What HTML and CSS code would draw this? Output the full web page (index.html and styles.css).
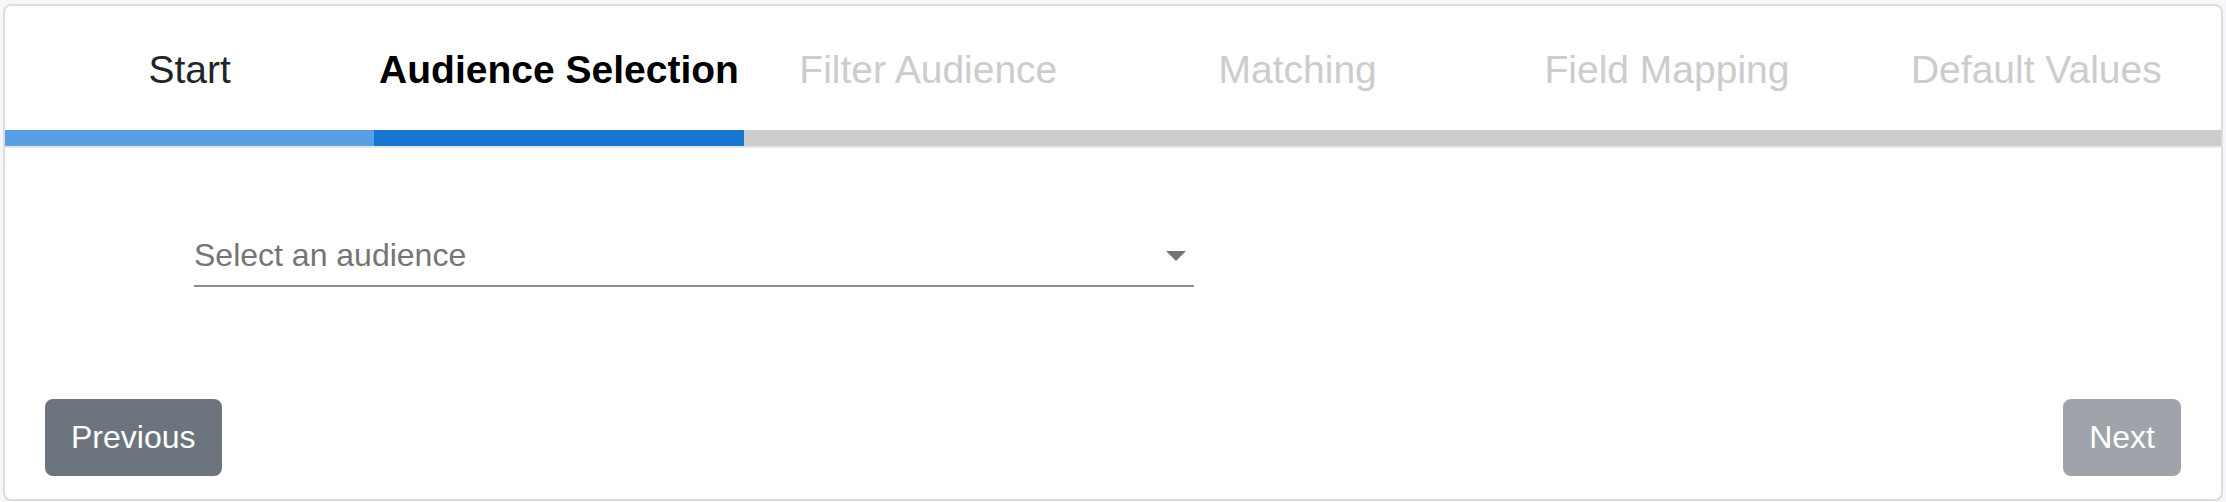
FILE: index.html
```html
<!DOCTYPE html>
<html lang="en">
<head>
<meta charset="utf-8">
<title>Audience Selection</title>
<link rel="stylesheet" href="styles.css">
</head>
<body>
<div class="card">
  <div class="steps">
    <div class="step step-done">Start</div>
    <div class="step step-active">Audience Selection</div>
    <div class="step">Filter Audience</div>
    <div class="step">Matching</div>
    <div class="step">Field Mapping</div>
    <div class="step">Default Values</div>
  </div>
  <div class="progress">
    <div class="seg seg-done"></div>
    <div class="seg seg-active"></div>
    <div class="seg"></div>
    <div class="seg"></div>
    <div class="seg"></div>
    <div class="seg"></div>
  </div>
  <div class="content">
    <div class="select">
      <span class="select-text">Select an audience</span>
      <svg class="select-arrow" viewBox="0 0 24 24" width="48" height="48" aria-hidden="true"><path d="M7 10l5 5 5-5z" fill="#757575"/></svg>
    </div>
  </div>
  <div class="footer">
    <button class="btn">Previous</button>
    <button class="btn btn-disabled" disabled>Next</button>
  </div>
</div>
</body>
</html>
```

FILE: styles.css
```css
html, body {
  margin: 0;
  background: #f5f7fa;
}
body {
  padding: 4px 3px 0 3px;
  font-family: "Liberation Sans", Arial, Helvetica, sans-serif;
}
.card {
  background: #fff;
  border: 2px solid #dcdcdc;
  border-radius: 8px;
  overflow: hidden;
  height: 493px;
  display: flex;
  flex-direction: column;
}
.steps {
  display: grid;
  grid-template-columns: repeat(6, 1fr);
  height: 124px;
  padding-top: 3px;
  box-sizing: border-box;
  align-items: center;
}
.step {
  text-align: center;
  font-size: 39px;
  color: #cccccc;
  white-space: nowrap;
}
.step-done {
  color: #212529;
}
.step-active {
  color: #000;
  font-weight: bold;
}
.progress {
  display: grid;
  grid-template-columns: repeat(6, 1fr);
  height: 16px;
  background: #cccccc;
  border-bottom: 2px solid #e6e6e6;
}
.seg-done {
  background: #57a0e5;
}
.seg-active {
  background: #1976d2;
}
.content {
  padding: 75px 0 0 189px;
  flex: 1;
}
.select {
  position: relative;
  width: 1000px;
  height: 64px;
  border-bottom: 2px solid #8c8c8c;
  display: flex;
  align-items: center;
  padding-top: 2px;
  box-sizing: border-box;
}
.select-text {
  font-size: 32px;
  color: #757575;
}
.select-arrow {
  position: absolute;
  right: -6px;
  top: 8px;
}
.footer {
  display: flex;
  justify-content: space-between;
  padding: 0 40px 23px 40px;
}
.btn {
  font-family: "Liberation Sans", Arial, Helvetica, sans-serif;
  font-size: 32px;
  line-height: 1.5;
  padding: 12px 24px 13px;
  color: #fff;
  background: #6c757d;
  border: 2px solid #6c757d;
  border-radius: 8px;
}
.btn-disabled {
  opacity: 0.65;
}
```
